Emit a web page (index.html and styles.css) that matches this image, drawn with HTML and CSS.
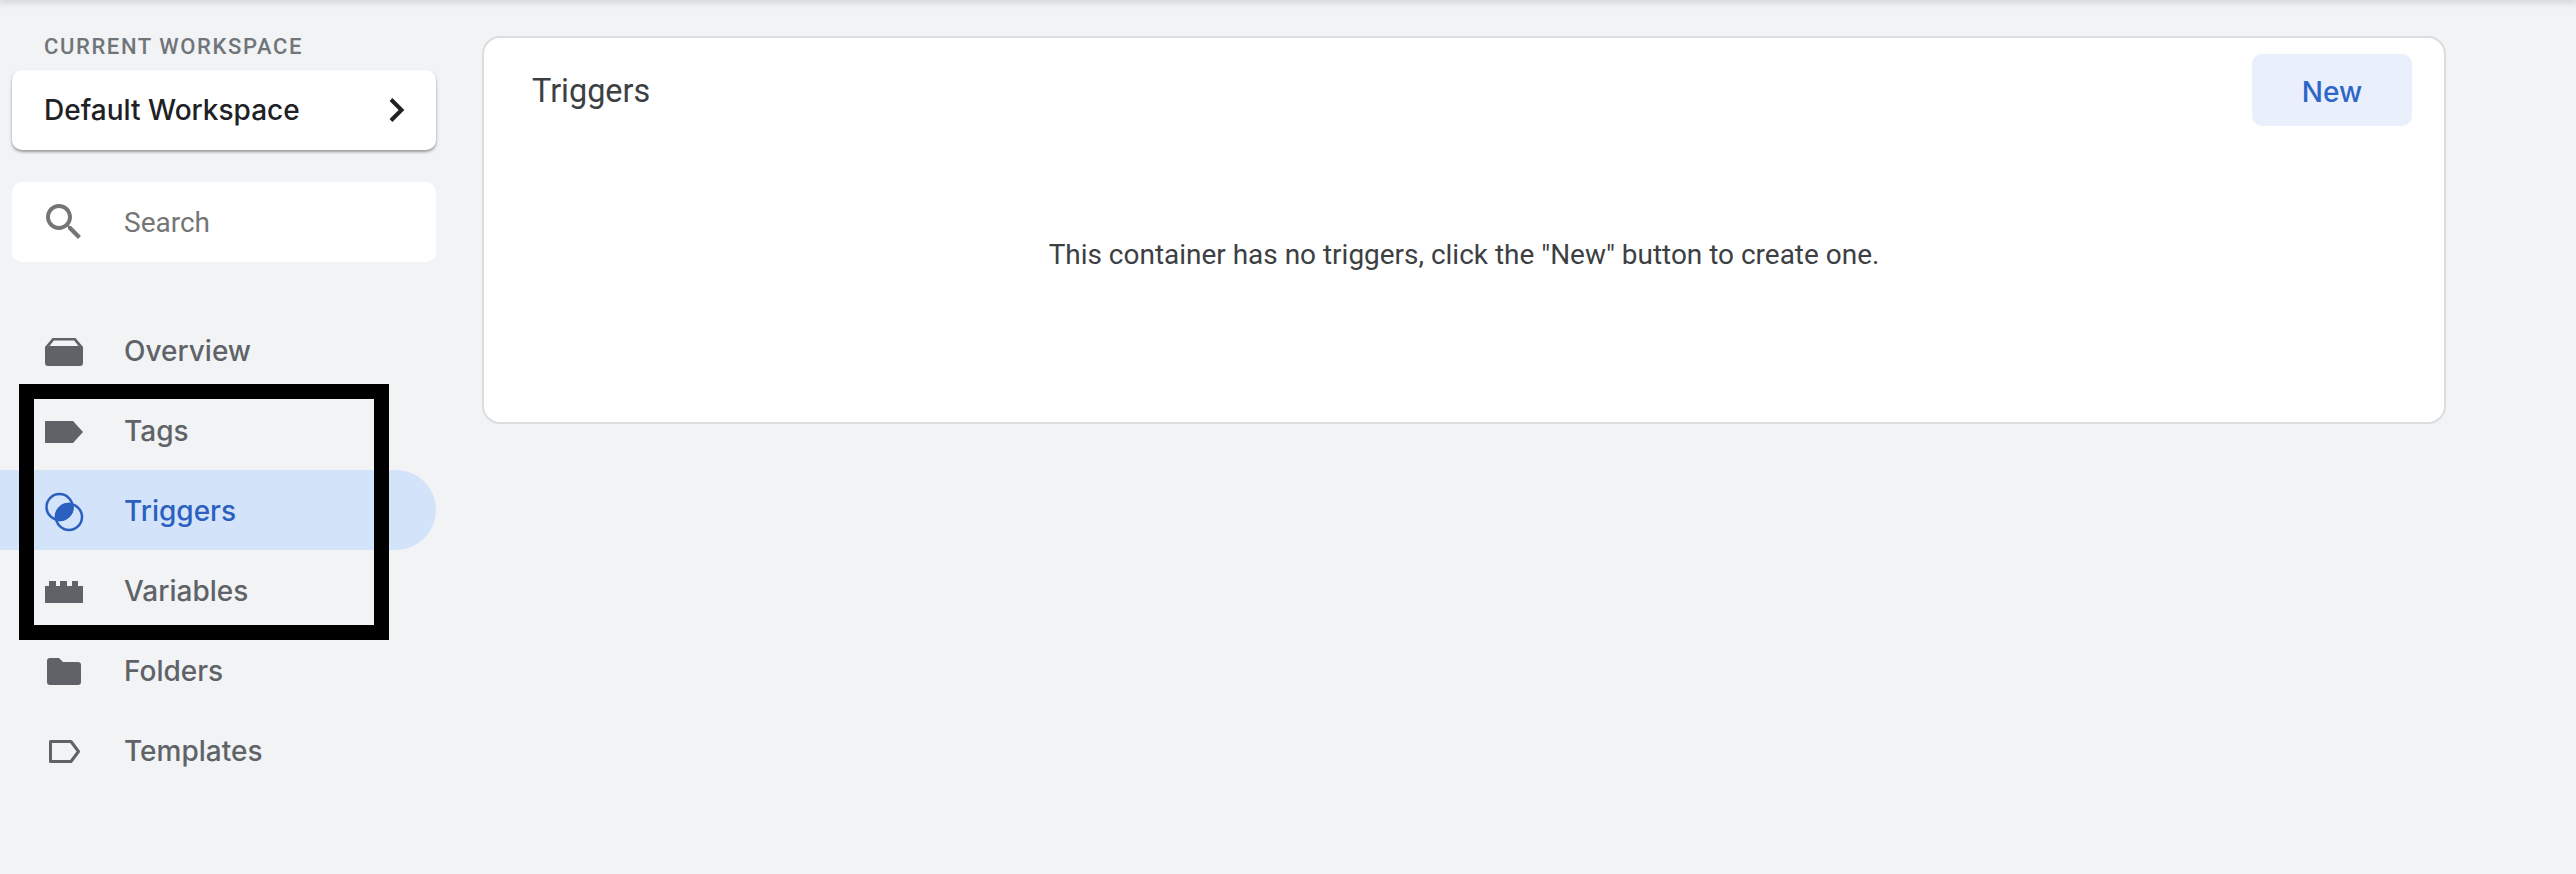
FILE: index.html
```html
<!DOCTYPE html>
<html lang="en">
<head>
<meta charset="utf-8">
<title>Triggers</title>
<link rel="stylesheet" href="styles.css">
</head>
<body>
<div class="topbar"></div>
<div class="app">
  <aside class="sidebar">
    <div class="ws-label">CURRENT WORKSPACE</div>
    <div class="ws-card">
      <span class="ws-name">Default Workspace</span>
      <svg class="chevron" width="16" height="26" viewBox="0 0 16 26"><path d="M2 2.5 12.5 13 2 23.5" fill="none" stroke="#202124" stroke-width="4"/></svg>
    </div>
    <div class="search">
      <svg class="icon" width="48" height="48" viewBox="0 0 24 24"><path fill="#757575" d="M15.5 14h-.79l-.28-.27C15.41 12.59 16 11.11 16 9.5 16 5.91 13.09 3 9.5 3S3 5.91 3 9.5 5.91 16 9.5 16c1.61 0 3.09-.59 4.23-1.57l.27.28v.79l5 4.99L20.49 19l-4.99-5zm-6 0C7.01 14 5 11.99 5 9.5S7.01 5 9.5 5 14 7.01 14 9.5 11.99 14 9.5 14z"/></svg>
      <span class="search-text">Search</span>
    </div>
    <nav class="nav">
      <div class="nav-item">
        <svg class="icon" width="48" height="48" viewBox="0 0 48 48"><path fill="#5f6368" d="M5 21 12.5 12H35.5L43 21V37a3 3 0 0 1-3 3H8a3 3 0 0 1-3-3Z"/><path fill="#f1f3f5" d="M9.500 20 13.800 14.500H34.200L38.500 20Z"/></svg>
        <span class="nav-label">Overview</span>
      </div>
      <div class="nav-item">
        <svg class="icon" width="48" height="48" viewBox="0 0 48 48"><path fill="#5f6368" d="M5 15H33L43 26 33 37H5Z"/></svg>
        <span class="nav-label">Tags</span>
      </div>
      <div class="nav-item active">
        <svg class="icon" width="48" height="48" viewBox="0 0 48 48">
          <defs><clipPath id="lens"><circle cx="19.500" cy="21" r="14.200"/></clipPath></defs>
          <circle cx="29" cy="31" r="14.200" fill="#2b5fc0" clip-path="url(#lens)"/>
          <circle cx="19.500" cy="21" r="13" fill="none" stroke="#2b5fc0" stroke-width="2.500"/>
          <circle cx="29" cy="31" r="13" fill="none" stroke="#2b5fc0" stroke-width="2.500"/>
        </svg>
        <span class="nav-label">Triggers</span>
      </div>
      <div class="nav-item">
        <svg class="icon" width="48" height="48" viewBox="0 0 48 48"><path fill="#5f6368" d="M5 20H9V15H16V20H20V15H27V20H32V15H38V20H43V37H5Z"/></svg>
        <span class="nav-label">Variables</span>
      </div>
      <div class="nav-item">
        <svg class="icon" width="48" height="48" viewBox="0 0 48 48"><path fill="#5f6368" d="M10 12H19L23 16H38a3 3 0 0 1 3 3V36a3 3 0 0 1-3 3H10a3 3 0 0 1-3-3V15a3 3 0 0 1 3-3Z"/></svg>
        <span class="nav-label">Folders</span>
      </div>
      <div class="nav-item">
        <svg class="icon" width="48" height="48" viewBox="0 0 48 48"><path fill="none" stroke="#5f6368" stroke-width="3" stroke-linejoin="round" d="M10.500 15.500H31L38.500 25.500 31 35.500H10.500Z"/></svg>
        <span class="nav-label">Templates</span>
      </div>
    </nav>
  </aside>
  <main class="main">
    <section class="card">
      <header class="card-head">
        <h1 class="card-title">Triggers</h1>
        <div class="new-btn"><span class="new-label">New</span></div>
      </header>
      <p class="empty">This container has no triggers, click the "New" button to create one.</p>
    </section>
  </main>
</div>
<div class="redaction"></div>
</body>
</html>
```
FILE: styles.css
```css
* { box-sizing: border-box; }
html, body { margin: 0; padding: 0; }
body {
  width: 2576px;
  height: 874px;
  overflow: hidden;
  background: #f1f3f5;
  font-family: Roboto, "Liberation Sans", sans-serif;
  position: relative;
}
.topbar {
  height: 0;
  box-shadow: 0 0 6px 2px rgba(60, 64, 67, 0.25);
}
.app { display: flex; align-items: flex-start; }
.sidebar { width: 436px; flex: none; padding-top: 35px; }
.ws-label {
  margin-left: 44px;
  font-size: 22px;
  line-height: 24px;
  font-weight: 500;
  letter-spacing: 1.600px;
  color: #70757a;
}
.ws-card {
  margin: 11px 0 0 12px;
  height: 80px;
  background: #fff;
  border-radius: 10px;
  box-shadow: 0 2px 3px rgba(60, 64, 67, 0.5);
  display: flex;
  align-items: center;
  justify-content: space-between;
  padding: 0 31px 0 32px;
}
.ws-name {
  font-family: Inter, Roboto, sans-serif;
  font-size: 28px;
  font-weight: 500;
  color: #202124;
}
.search {
  margin: 32px 0 0 12px;
  height: 80px;
  background: #fff;
  border-radius: 10px;
  display: flex;
  align-items: center;
  padding-left: 28px;
}
.icon { flex: none; display: block; }
.search-text { margin-left: 36px; font-size: 28px; color: #757575; }
.nav { margin-top: 48px; }
.nav-item {
  height: 80px;
  display: flex;
  align-items: center;
  padding-left: 40px;
  gap: 36px;
  font-family: Inter, Roboto, sans-serif;
  font-size: 28px;
  font-weight: 500;
  color: #5f6368;
}
.nav-label { padding-top: 2px; }
.nav-item.active {
  background: #d3e3fa;
  color: #2b5fc0;
  border-radius: 0 40px 40px 0;
}
.main { flex: 1; padding: 36px 130px 0 46px; }
.card {
  height: 388px;
  background: #fff;
  border: 2px solid #dadce0;
  border-radius: 18px;
}
.card-head {
  display: flex;
  justify-content: space-between;
  align-items: flex-start;
  padding: 16px 32px 0 48px;
}
.card-title {
  margin: 0;
  padding-top: 17px;
  font-size: 32.400px;
  line-height: 40px;
  font-weight: 400;
  color: #3c4043;
}
.new-btn {
  width: 160px;
  height: 72px;
  background: #e9effb;
  border-radius: 10px;
  display: flex;
  align-items: center;
  justify-content: center;
  font-family: Inter, Roboto, sans-serif;
  font-size: 28px;
  font-weight: 500;
  color: #2b66c8;
}
.new-label { padding-top: 4px; }
.empty {
  margin: 111px 0 0;
  text-align: center;
  font-size: 27.960px;
  line-height: 36px;
  color: #3c4043;
}
.redaction {
  position: absolute;
  left: 19px;
  top: 384px;
  width: 370px;
  height: 256px;
  border: 15px solid #000;
}
```
